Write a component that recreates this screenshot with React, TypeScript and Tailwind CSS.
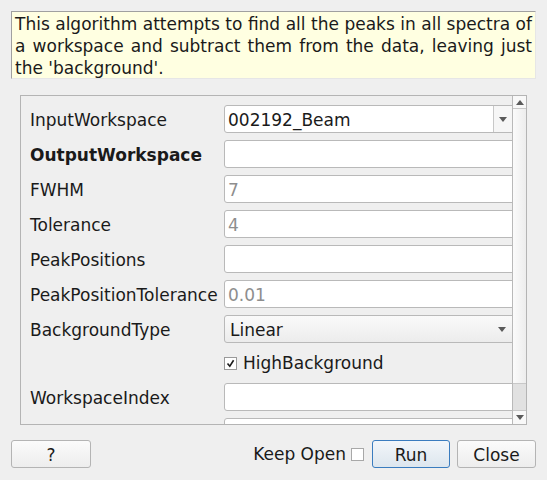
import React from 'react';

const font = "font-['DejaVu_Sans','Liberation_Sans',sans-serif]";

const Arrow: React.FC<{ up?: boolean }> = ({ up }) => (
  <svg width="8" height="5" viewBox="0 0 8 5" className="block">
    {up ? <path d="M0 5 L4 0 L8 5 Z" fill="#5a5a5a" /> : <path d="M0 0 L8 0 L4 5 Z" fill="#5a5a5a" />}
  </svg>
);

const TextField: React.FC<{ value?: string; muted?: boolean }> = ({ value, muted }) => (
  <div
    className={`h-[28px] w-[320px] shrink-0 rounded-[3px] border border-[#b9b9b9] bg-white pl-[3px] pt-[1px] text-[17px] leading-[26px] ${
      muted ? 'text-[#8e8e8e]' : 'text-[#1a1a1a]'
    }`}
  >
    {value}
  </div>
);

const Row: React.FC<{ label: string; bold?: boolean; children: React.ReactNode }> = ({ label, bold, children }) => (
  <div className="flex h-[28px] items-center">
    <div className={`w-[194px] shrink-0 pt-[2px] text-[17px] leading-[28px] text-[#1a1a1a] ${bold ? 'font-bold' : ''}`}>{label}</div>
    {children}
  </div>
);

const App: React.FC = () => {
  return (
    <div className={`${font} flex h-[480px] w-[547px] flex-col bg-[#efefef] px-[11px] pt-[11px] text-[#1a1a1a]`}>
      {/* Algorithm description */}
      <div className="h-[68px] border border-[#a0a0a0] border-b-[#e6e6e6] border-r-[#e6e6e6] bg-[#ffffe1] px-[3px] pt-[1px] text-[17px] leading-[22px]">
        <div className="whitespace-nowrap text-justify [text-align-last:justify]">
          This algorithm attempts to find all the peaks in all spectra of
        </div>
        <div className="text-justify [text-align-last:justify]">
          a workspace and subtract them from the data, leaving just
        </div>
        <div>the 'background'.</div>
      </div>

      {/* Property list */}
      <div className="mx-[9px] mt-[16px] flex h-[330px] border border-[#b4b4b4]">
        <div className="flex-1 overflow-hidden pl-[9px] pt-[9px]">
          <div className="flex flex-col gap-[7px]">
            <Row label="InputWorkspace">
              <div className="flex h-[28px] w-[320px] shrink-0 rounded-[3px] border border-[#b9b9b9] bg-white">
                <div className="w-[268px] pl-[3px] pt-[1px] text-[17px] leading-[26px]">002192_Beam</div>
                <div className="flex w-[19px] items-center justify-center border-l border-[#c8c8c8] bg-[#f6f6f6]">
                  <Arrow />
                </div>
              </div>
            </Row>
            <Row label="OutputWorkspace" bold>
              <TextField />
            </Row>
            <Row label="FWHM">
              <TextField value="7" muted />
            </Row>
            <Row label="Tolerance">
              <TextField value="4" muted />
            </Row>
            <Row label="PeakPositions">
              <TextField />
            </Row>
            <Row label="PeakPositionTolerance">
              <TextField value="0.01" muted />
            </Row>
            <Row label="BackgroundType">
              <div className="flex h-[28px] w-[320px] shrink-0 items-center rounded-[3px] border border-[#b9b9b9] bg-gradient-to-b from-[#fafafa] to-[#ececec]">
                <div className="w-[273px] pl-[5px] pt-[1px] text-[17px] leading-[26px]">Linear</div>
                <Arrow />
              </div>
            </Row>
            <div className="flex h-[26px] items-center pl-[194px]">
              <div className="flex h-[13px] w-[13px] items-center justify-center border border-[#9a9a9a] bg-white">
                <svg width="9" height="9" viewBox="0 0 9 9" className="block">
                  <path d="M1.5 4.5 L3.8 7.2 L7.6 1.2" fill="none" stroke="#1a1a1a" strokeWidth="1.6" />
                </svg>
              </div>
              <span className="ml-[6px] pt-[1px] text-[17px]">HighBackground</span>
            </div>
            <Row label="WorkspaceIndex">
              <TextField />
            </Row>
            <Row label="">
              <TextField />
            </Row>
          </div>
        </div>

        {/* Scrollbar */}
        <div className="flex w-[14px] flex-col border-l border-[#b9b9b9] bg-[#f4f4f4]">
          <div className="flex h-[13px] items-center justify-center border-b border-[#c8c8c8] bg-[#f8f8f8]">
            <Arrow up />
          </div>
          <div className="flex-1 bg-gradient-to-r from-[#fbfbfb] to-[#ededed]" />
          <div className="h-[27px] border-t border-[#c8c8c8] bg-[#e1e1e1]" />
          <div className="flex h-[14px] items-center justify-center border-t border-[#c8c8c8] bg-[#f8f8f8]">
            <Arrow />
          </div>
        </div>
      </div>

      {/* Buttons */}
      <div className="mt-[15px] flex h-[28px] items-center text-[17px]">
        <button className="h-[28px] w-[80px] rounded-[3px] border border-[#b4b4b4] bg-gradient-to-b from-[#fbfbfb] to-[#ededed] pt-[2px]">
          ?
        </button>
        <div className="flex-1" />
        <span className="pt-[2px]">Keep Open</span>
        <div className="ml-[5px] mt-[1px] h-[13px] w-[13px] border border-[#a8a8a8] bg-white" />
        <button className="ml-[8px] h-[28px] w-[78px] rounded-[3px] border border-[#3a7cbf] bg-gradient-to-b from-[#f2f6fa] to-[#dde6ee] pt-[2px]">
          Run
        </button>
        <button className="ml-[7px] h-[28px] w-[79px] rounded-[3px] border border-[#b4b4b4] bg-gradient-to-b from-[#fbfbfb] to-[#ededed] pt-[2px]">
          Close
        </button>
      </div>
    </div>
  );
};

export default App;
